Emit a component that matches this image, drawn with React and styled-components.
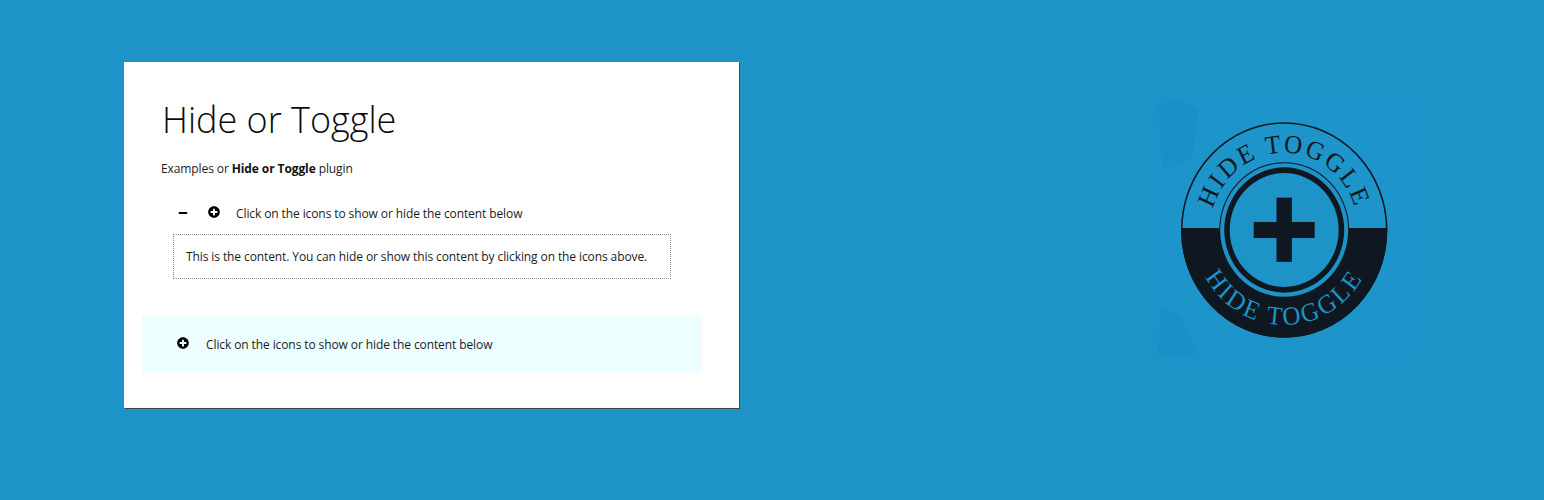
import React from 'react';
import styled, { createGlobalStyle } from 'styled-components';
import { FaMinus, FaPlusCircle } from 'react-icons/fa';

const Global = createGlobalStyle`
  html, body { margin: 0; padding: 0; background: #1e93c8; }
`;

const Page = styled.div`
  width: 1544px;
  height: 500px;
  box-sizing: border-box;
  padding: 62px 130px 0 124px;
  display: flex;
  justify-content: space-between;
  align-items: flex-start;
  background: #1e93c8;
  font-family: "Open Sans", "Noto Sans", sans-serif;
  color: #1c1c1c;
  overflow: hidden;
`;

const Card = styled.section`
  width: 615px;
  height: 346px;
  box-sizing: border-box;
  background: #fff;
  box-shadow: 1px 1px 0 #3d4448;
  padding: 33px 37px 0 18px;
`;

const Title = styled.h1`
  margin: 0 0 0 20px;
  font-size: 36px;
  line-height: 50px;
  font-weight: 300;
  color: #0c0c0c;
`;

const Intro = styled.p`
  margin: 15px 0 0 19px;
  font-size: 12px;
  line-height: 18px;
  letter-spacing: -0.1px;
  b { font-weight: 700; color: #111; }
`;

const Toggle = styled.div`
  display: flex;
  align-items: center;
  height: 20px;
  margin: ${p => p.$top}px 0 0 ${p => p.$left}px;
  font-size: 12px;
  letter-spacing: -0.1px;
`;

const IconSlot = styled.span`
  display: inline-flex;
  width: ${p => p.$width}px;
  color: #000;
  margin-top: ${p => p.$lift}px;
`;

const ContentBox = styled.div`
  margin: 11px 31px 0 31px;
  height: 45px;
  box-sizing: border-box;
  border: 1px dotted #8d8d8d;
  padding: 0 12px;
  display: flex;
  align-items: center;
  font-size: 12px;
  letter-spacing: -0.1px;
`;

const Band = styled.div`
  margin-top: 37px;
  height: 57px;
  background: #ecfeff;
  display: flex;
  align-items: center;
`;

const LogoSvg = styled.svg`
  display: block;
  width: 256px;
  height: 256px;
  margin-top: 38px;
  flex: none;
`;

const dark = '#0f1720';
const blue = '#1e93c8';
const logoFont = '"Liberation Serif", serif';

const Logo = () => (
  <LogoSvg viewBox="0 0 256 256" aria-label="Hide Toggle logo">
    <defs>
      <clipPath id="lower"><rect x="0" y="128" width="256" height="128" /></clipPath>
      <path id="arcTop" d="M 52 130 A 74 74 0 0 1 200 130" fill="none" />
      <path id="arcBottom" d="M 35 130 A 91 91 0 0 0 217 130" fill="none" />
    </defs>
    <rect x="0" y="0" width="256" height="256" fill="#1d95cb" />
    <path d="M0 5 C12 -2 30 2 40 8 L34 60 L4 70 Z M2 210 C18 205 32 226 40 256 L0 256 Z" fill="#1b90c6" />
    <g transform="translate(126.2 130) scale(1 1.044) translate(-126 -130)">
      <circle cx="126" cy="130" r="102.5" fill="#1d95cb" stroke={dark} strokeWidth="1.5" />
      <circle cx="126" cy="130" r="103" fill={dark} clipPath="url(#lower)" />
      <circle cx="126" cy="130" r="65" fill={dark} />
      <circle cx="126" cy="130" r="64" fill={blue} />
      <circle cx="126" cy="130" r="60" fill={dark} />
      <circle cx="126" cy="130" r="54.5" fill={blue} />
      <rect x="95.5" y="122.3" width="61" height="15.4" fill={dark} />
      <rect x="118.3" y="99" width="15.4" height="61.5" fill={dark} />
      <text fontFamily={logoFont} fontSize="25" fill={dark} textAnchor="middle" letterSpacing="2.4">
        <textPath href="#arcTop" startOffset="50%">HIDE TOGGLE</textPath>
      </text>
      <text fontFamily={logoFont} fontSize="25" fill={blue} textAnchor="middle" letterSpacing="2.4">
        <textPath href="#arcBottom" startOffset="50%">HIDE TOGGLE</textPath>
      </text>
    </g>
  </LogoSvg>
);

export default function App() {
  return (
    <Page>
      <Global />
      <Card>
        <Title>Hide or Toggle</Title>
        <Intro>Examples or <b>Hide or Toggle</b> plugin</Intro>
        <Toggle $top={25} $left={36}>
          <IconSlot $width={30} $lift={0}><FaMinus size={10} /></IconSlot>
          <IconSlot $width={28} $lift={-3}><FaPlusCircle size={12} /></IconSlot>
          Click on the icons to show or hide the content below
        </Toggle>
        <ContentBox>This is the content. You can hide or show this content by clicking on the icons above.</ContentBox>
        <Band>
          <Toggle $top={0} $left={35}>
            <IconSlot $width={29} $lift={-3}><FaPlusCircle size={12} /></IconSlot>
            Click on the icons to show or hide the content below
          </Toggle>
        </Band>
      </Card>
      <Logo />
    </Page>
  );
}
